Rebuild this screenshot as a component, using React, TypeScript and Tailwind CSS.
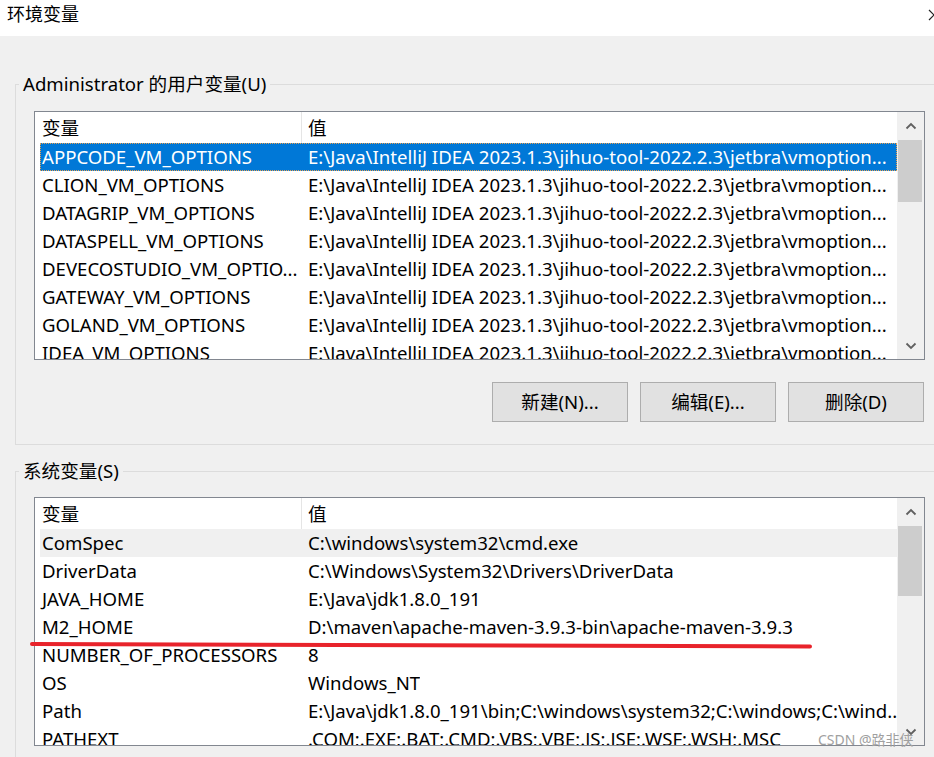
import React from "react";

type Row = { name: string; value: string };

const jb = String.raw`E:\Java\IntelliJ IDEA 2023.1.3\jihuo-tool-2022.2.3\jetbra\vmoption...`;

const userVars: Row[] = [
  { name: "APPCODE_VM_OPTIONS", value: jb },
  { name: "CLION_VM_OPTIONS", value: jb },
  { name: "DATAGRIP_VM_OPTIONS", value: jb },
  { name: "DATASPELL_VM_OPTIONS", value: jb },
  { name: "DEVECOSTUDIO_VM_OPTIO...", value: jb },
  { name: "GATEWAY_VM_OPTIONS", value: jb },
  { name: "GOLAND_VM_OPTIONS", value: jb },
  { name: "IDEA_VM_OPTIONS", value: jb },
];

const sysVars: Row[] = [
  { name: "ComSpec", value: String.raw`C:\windows\system32\cmd.exe` },
  { name: "DriverData", value: String.raw`C:\Windows\System32\Drivers\DriverData` },
  { name: "JAVA_HOME", value: String.raw`E:\Java\jdk1.8.0_191` },
  { name: "M2_HOME", value: String.raw`D:\maven\apache-maven-3.9.3-bin\apache-maven-3.9.3` },
  { name: "NUMBER_OF_PROCESSORS", value: "8" },
  { name: "OS", value: "Windows_NT" },
  { name: "Path", value: String.raw`E:\Java\jdk1.8.0_191\bin;C:\windows\system32;C:\windows;C:\wind...` },
  { name: "PATHEXT", value: ".COM;.EXE;.BAT;.CMD;.VBS;.VBE;.JS;.JSE;.WSF;.WSH;.MSC" },
];

function Chevron({ down }: { down?: boolean }) {
  return (
    <svg width="12" height="8" viewBox="0 0 12 8" fill="none">
      <polyline
        points={down ? "1.5,1.5 6,6 10.5,1.5" : "1.5,6.5 6,2 10.5,6.5"}
        stroke="#606060"
        strokeWidth="1.8"
      />
    </svg>
  );
}

function ListBox({
  rows,
  thumbHeight,
  selected,
  hovered,
}: {
  rows: Row[];
  thumbHeight: string;
  selected?: number;
  hovered?: number;
}) {
  return (
    <div className="flex h-[249px] w-[891px] border border-[#828790] bg-white">
      <div className="flex min-w-0 flex-1 flex-col">
        <div className="flex h-[31px] shrink-0 items-center">
          <div className="w-[266px] pl-[7px]">变量</div>
          <div className="h-full border-l border-[#e5e5e5]" />
          <div className="pl-[6px]">值</div>
        </div>
        <div className="flex-1 overflow-hidden pl-[5px]">
          {rows.map((r, i) => (
            <div
              key={r.name}
              className={
                "flex h-[28px] items-center whitespace-nowrap " +
                (i === selected
                  ? "bg-[#0078d7] text-white outline-1 -outline-offset-1 outline-dotted outline-[#e8a050]"
                  : i === hovered
                    ? "bg-[#f0f0f0]"
                    : "")
              }
            >
              <div className="w-[261px] shrink-0 overflow-hidden pl-[2px]">{r.name}</div>
              <div className="overflow-hidden pl-[7px]">{r.value}</div>
            </div>
          ))}
        </div>
      </div>
      <div className="flex w-[27px] shrink-0 flex-col bg-[#f0f0f0]">
        <div className="flex h-[27px] items-center justify-center">
          <Chevron />
        </div>
        <div className="flex-1">
          <div className={"ml-[1px] mt-[1px] w-[24px] bg-[#cdcdcd] " + thumbHeight} />
        </div>
        <div className="flex h-[27px] items-center justify-center">
          <Chevron down />
        </div>
      </div>
    </div>
  );
}

function Button({ label }: { label: string }) {
  return (
    <button className="flex h-[40px] w-[136px] items-center justify-center border border-[#adadad] bg-[#e1e1e1]">
      {label}
    </button>
  );
}

export default function App() {
  return (
    <div className="relative h-[757px] w-[934px] overflow-hidden bg-[#f0f0f0] text-[18.6px] text-black font-['Noto_Sans','Noto_Sans_CJK_SC',sans-serif]">
      <div className="relative h-[36px] bg-white">
        <span className="absolute left-[7px] top-0 text-[18px] leading-[28px]">环境变量</span>
        <svg className="absolute left-[928px] top-[9px]" width="12" height="12" viewBox="0 0 12 12">
          <path d="M1 1 L11 11 M11 1 L1 11" stroke="#222" strokeWidth="1.2" />
        </svg>
      </div>

      <div className="pl-[15px]">
        <fieldset className="mt-[36px] w-[940px] border border-[#dcdcdc] pb-[22px]">
          <legend className="ml-[3px] px-[4px] leading-[24px]">Administrator 的用户变量(U)</legend>
          <div className="mt-[15px] pl-[18px]">
            <ListBox rows={userVars} thumbHeight="h-[62px]" selected={0} />
          </div>
          <div className="mt-[22px] flex w-[908px] justify-end gap-[12px]">
            <Button label="新建(N)..." />
            <Button label="编辑(E)..." />
            <Button label="删除(D)" />
          </div>
        </fieldset>

        <fieldset className="mt-[14px] w-[940px] border border-[#dcdcdc] pb-[20px]">
          <legend className="ml-[3px] px-[4px] leading-[24px]">系统变量(S)</legend>
          <div className="mt-[14px] pl-[18px]">
            <ListBox rows={sysVars} thumbHeight="h-[70px]" hovered={0} />
          </div>
        </fieldset>
      </div>

      <svg className="pointer-events-none absolute left-0 top-0" width="934" height="757">
        <path d="M32 644 Q 420 644.5 810 646.5" stroke="#e8232b" strokeWidth="4" strokeLinecap="round" fill="none" />
      </svg>

      <div className="pointer-events-none absolute left-[818px] top-[731px] text-[14px] leading-[18px] text-[#a0a0a0]">
        CSDN @路非侠
      </div>
    </div>
  );
}
